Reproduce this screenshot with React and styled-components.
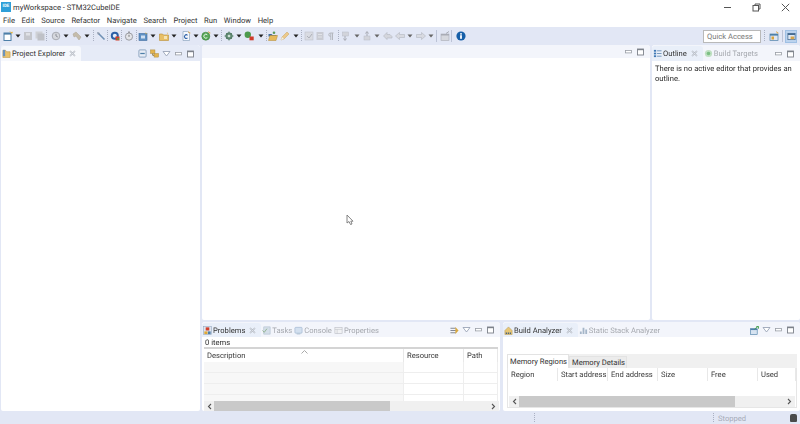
import React from 'react';
import styled, { createGlobalStyle } from 'styled-components';

const GlobalStyle = createGlobalStyle`
    html, body {
        margin: 0;
        padding: 0;
        background: #e2e7f5;
        overflow: hidden;
    }
    body {
        font-family: Roboto, 'Liberation Sans', sans-serif;
        font-size: 7.6px;
        color: #2c2c2c;
        text-rendering: geometricPrecision;
    }
`;

const Frame = styled.div`
    position: relative;
    width: 800px;
    height: 424px;
    display: flex;
    flex-direction: column;
    overflow: hidden;
    filter: blur(0.3px);
`;

const TitleBar = styled.div`
    height: 14px;
    background: #fff;
    display: flex;
    align-items: center;
    padding-left: 1px;
    font-size: 7.6px;
    color: #333;
`;

const AppBadge = styled.div`
    width: 10px;
    height: 10px;
    background: #2f9fd8;
    color: #fff;
    font-size: 4.5px;
    font-weight: 700;
    line-height: 10px;
    text-align: center;
    margin-right: 2px;
`;

const WindowButtons = styled.div`
    margin-left: auto;
    display: flex;
    width: 87px;
    height: 14px;
`;

const WindowButton = styled.div`
    width: 29px;
    display: flex;
    align-items: center;
    justify-content: center;
`;

const MenuBar = styled.div`
    height: 13px;
    background: #fff;
    display: flex;
    align-items: center;
    padding-left: 3px;
    gap: 6.7px;
    color: #333;
`;

const Toolbar = styled.div`
    height: 18px;
    background: #e2e7f5;
    display: flex;
    align-items: center;
    padding-left: 3px;
`;

const Tool = styled.div`
    flex: none;
    width: ${(p) => p.$w}px;
    height: 12px;
    display: flex;
    align-items: center;
    & > * {
        flex: none;
    }
`;

const ToolSep = styled.div`
    flex: none;
    width: 1px;
    height: 12px;
    margin-left: ${(p) => p.$left ?? 4}px;
    background: ${(p) => (p.$solid ? '#bcc3d6' : 'repeating-linear-gradient(#aab0c2 0 1px, transparent 1px 2px)')};
`;

const QuickAccess = styled.div`
    margin-left: auto;
    width: 58px;
    height: 13px;
    box-sizing: border-box;
    background: #fff;
    border: 1px solid #b9b9b9;
    color: #777;
    line-height: 11px;
    padding-left: 3px;
`;

const PerspectiveBar = styled.div`
    flex: none;
    display: flex;
    align-items: center;
    width: 39px;
`;

const PerspectiveIcon = styled.div`
    margin-left: 4px;
    margin-right: 1px;
    display: flex;
`;

const ActivePerspective = styled.div`
    margin-left: 2px;
    width: 12px;
    height: 13px;
    background: #bcd3ee;
    border: 1px solid #9fc0e4;
    box-sizing: border-box;
    display: flex;
    align-items: center;
    justify-content: center;
`;

const Workbench = styled.div`
    flex: 1;
    min-height: 0;
    display: flex;
    gap: 2px;
    padding-left: 1px;
`;

const LeftColumn = styled.div`
    width: 199px;
    display: flex;
    margin-bottom: 1px;
`;

const RightColumn = styled.div`
    flex: 1;
    min-width: 0;
    display: flex;
    flex-direction: column;
    gap: 2px;
`;

const TopRow = styled.div`
    height: 275px;
    display: flex;
    gap: 2px;
`;

const BottomRow = styled.div`
    flex: 1;
    min-height: 0;
    display: flex;
    gap: 3px;
    margin-bottom: 1px;
`;

const Panel = styled.section`
    flex: ${(p) => (p.$width ? 'none' : 1)};
    width: ${(p) => (p.$width ? `${p.$width}px` : 'auto')};
    min-width: 0;
    display: flex;
    flex-direction: column;
    background: #fff;
    border-radius: 3px 3px 2px 2px;
    overflow: hidden;
`;

const PanelHeader = styled.div`
    flex: none;
    height: ${(p) => p.$height || 15}px;
    box-sizing: border-box;
    padding-top: 1px;
    display: flex;
    align-items: stretch;
    background: ${(p) => p.$bg || '#f3f5fb'};
    white-space: nowrap;
`;

const Tab = styled.div`
    display: flex;
    align-items: center;
    gap: 1px;
    padding: 0 ${(p) => (p.$active ? 5 : 0)}px 0 1px;
    background: ${(p) => (p.$active ? p.$activeBg || '#e9eff9' : 'transparent')};
    color: ${(p) => (p.$active ? '#333' : '#a5a8ae')};
    border-radius: 3px 3px 0 0;
    margin-right: ${(p) => (p.$active ? 0 : 1)}px;
`;

const CloseGlyph = styled.svg`
    margin-left: 3px;
`;

const ViewTools = styled.div`
    margin-left: auto;
    display: flex;
    align-items: center;
    gap: 3px;
    padding-right: 5px;
`;

const PanelBody = styled.div`
    flex: 1;
    min-height: 0;
    display: flex;
    flex-direction: column;
    padding: ${(p) => p.$padding || '0'};
    line-height: 10px;
`;

const ItemCount = styled.div`
    height: 10px;
    padding-left: 1px;
    line-height: 12px;
    border-bottom: 2px solid #d4d4d4;
    margin: 0 2px;
`;

const DataTable = styled.div`
    flex: 1;
    min-height: 0;
    position: relative;
    margin: ${(p) => p.$margin || '0 2px'};
    display: grid;
    grid-template-columns: ${(p) => p.$columns};
    grid-template-rows: 13px;
    grid-auto-rows: 11px;
    overflow: hidden;
`;

const HeadCell = styled.div`
    padding-left: 3px;
    line-height: 13px;
    border-right: 1px solid #e8e8e8;
    color: #3a3a3a;
    white-space: nowrap;
`;

const RowCell = styled.div`
    background: ${(p) => (p.$shade ? '#f7f7f7' : '#fff')};
    border-right: 1px solid #eee;
    border-bottom: 1px solid #eeeeee;
`;

const SortMark = styled.svg`
    position: absolute;
    left: 97px;
    top: 1px;
`;

const ScrollBar = styled.div`
    flex: none;
    height: ${(p) => p.$height || 10}px;
    margin: ${(p) => p.$margin || '0 1px 0 2px'};
    background: #f0f0f0;
    display: flex;
    align-items: center;
    justify-content: space-between;
    position: relative;
`;

const ScrollArrow = styled.svg`
    margin: 0 3px;
`;

const ScrollThumb = styled.div`
    position: absolute;
    top: 0;
    bottom: 0;
    left: ${(p) => p.$left}px;
    width: ${(p) => p.$width}px;
    background: #c9c9c9;
`;

const MemoryTabs = styled.div`
    margin: 17px 3px 0 4px;
    height: 14px;
    background: #f0f0f0;
    display: flex;
    align-items: flex-end;
    flex: none;
`;

const MemoryTab = styled.div`
    width: ${(p) => p.$width}px;
    height: ${(p) => (p.$active ? 14 : 12)}px;
    padding-left: 2px;
    line-height: ${(p) => (p.$active ? 13 : 11)}px;
    background: ${(p) => (p.$active ? '#fff' : '#ececec')};
    border: 1px solid #e3e3e3;
    border-bottom: 0;
    box-sizing: border-box;
    white-space: nowrap;
    color: #333;
`;

const MemoryBody = styled.div`
    flex: 1;
    min-height: 0;
    display: flex;
    flex-direction: column;
    margin: 0 3px 3px 4px;
    border: 1px solid #e6e6e6;
    border-top: 0;
`;

const StatusBar = styled.div`
    height: 12px;
    flex: none;
    background: #e2e7f5;
    display: flex;
    align-items: center;
    color: #a6abb8;
`;

const StatusSep = styled.div`
    width: 1px;
    height: 10px;
    margin-left: ${(p) => p.$left}px;
    margin-right: 4px;
    background: repeating-linear-gradient(#aab0c2 0 1px, transparent 1px 2px);
`;

const TrashMark = styled.div`
    margin-left: auto;
    margin-right: 3px;
    width: 7px;
    height: 8px;
    background: #4a4a4a;
    border-radius: 2px 2px 1px 1px;
`;

const Cursor = styled.svg`
    position: absolute;
    left: 346px;
    top: 214px;
`;

const Sv = ({ s = 9, children, ...rest }) => (
    <svg width={s} height={s} viewBox="0 0 10 10" {...rest}>
        {children}
    </svg>
);

const icons = {
    new: (
        <>
            <rect x="1" y="2" width="7" height="7.5" fill="#fff" stroke="#4d7fa8" />
            <rect x="1" y="2" width="7" height="1.6" fill="#4d7fa8" />
            <path d="M7 0.5l1 1.2 1.3-.6-.5 1.5" stroke="#e3b23c" fill="none" />
        </>
    ),
    save: (
        <>
            <rect x="1" y="1" width="8" height="8" fill="#c4c6cc" />
            <rect x="3" y="2" width="4" height="2.5" fill="#dfe1e6" />
        </>
    ),
    saveAll: (
        <>
            <rect x="0.5" y="0.5" width="7" height="7" fill="#cfd1d6" />
            <rect x="2.5" y="2.5" width="7" height="7" fill="#bfc1c7" />
        </>
    ),
    clock: (
        <>
            <circle cx="5" cy="5" r="3.8" fill="#d6d8de" stroke="#a8abb3" />
            <path d="M5 2.8V5l1.8 1" stroke="#8d9099" fill="none" />
        </>
    ),
    hammer: <path d="M1 3l3-2 5 5-2 3-3-4-2 1z" fill="#c4bcab" stroke="#aca391" strokeWidth=".5" />,
    pin: (
        <>
            <path d="M2 2l6.5 6.5" stroke="#6f90b4" strokeWidth="1.6" />
            <path d="M1 1l3 1-2 2z" fill="#8f9aab" />
        </>
    ),
    debugBug: (
        <>
            <circle cx="4.8" cy="4.8" r="4" fill="#2c5fa6" />
            <circle cx="4.8" cy="4.8" r="2" fill="#e7eefa" />
            <rect x="5.5" y="5.5" width="4" height="4" fill="#d1402c" />
            <circle cx="8" cy="8" r="1" fill="#54a33c" />
        </>
    ),
    timer: (
        <>
            <circle cx="5" cy="5.6" r="3.6" fill="#e3e4e8" stroke="#9a9ca2" />
            <rect x="4" y="0.5" width="2" height="1.5" fill="#9a9ca2" />
            <path d="M5 3.8v2" stroke="#777" />
        </>
    ),
    project: (
        <>
            <rect x="1" y="2.5" width="8" height="7" fill="#5f91c4" stroke="#3e6c9f" strokeWidth=".6" />
            <rect x="3" y="4.5" width="4" height="3" fill="#cfe0f2" />
            <path d="M7 0.5l.6 1.2 1.4.2-1 1 .2 1.3" fill="#e3b23c" />
        </>
    ),
    folderNew: (
        <>
            <path d="M.5 3h3l1 1h5v5.5h-9z" fill="#e8bf66" stroke="#b98f36" strokeWidth=".6" />
            <rect x="5" y="5" width="3" height="3" fill="#f5e3b4" />
            <path d="M7.5.5l.5 1.2 1.3.3-1 .8" fill="#e3a53c" />
        </>
    ),
    fileC: (
        <>
            <path d="M2 .5h4.5L8.5 2.5v7H2z" fill="#f4f7fb" stroke="#8ea6c0" strokeWidth=".7" />
            <path d="M6.5 4.3a1.8 1.8 0 1 0 0 2.6" stroke="#2c5fa6" fill="none" strokeWidth="1.1" />
            <path d="M7.5.5l.5 1.2 1.3.3" stroke="#e3a53c" fill="none" />
        </>
    ),
    greenC: (
        <>
            <circle cx="4.8" cy="5.2" r="4" fill="#58a858" stroke="#3b7f3b" strokeWidth=".6" />
            <path d="M6.3 3.8a2 2 0 1 0 0 2.8" stroke="#e9f5e9" fill="none" />
            <path d="M7.5.5l.5 1.2 1.3.3" stroke="#e3a53c" fill="none" />
        </>
    ),
    gear: (
        <>
            <circle cx="5" cy="5" r="3.2" fill="#6e9a80" stroke="#4e7460" />
            <path d="M5 0.5v9M.5 5h9M2 2l6 6M8 2l-6 6" stroke="#5f8770" />
            <circle cx="5" cy="5" r="1.3" fill="#cfe0d6" />
        </>
    ),
    run: (
        <>
            <circle cx="3.8" cy="3.8" r="3.2" fill="#4d9a4d" />
            <rect x="5.5" y="5.5" width="4.2" height="3.8" fill="#cf3a2a" />
        </>
    ),
    folderOpen: (
        <>
            <path d="M.5 3h3l1 1h4v1.5h-8z" fill="#3f6f9f" />
            <path d="M.5 9.5l1.5-5h7.5l-1.5 5z" fill="#e6ba5a" stroke="#b48a32" strokeWidth=".5" />
            <circle cx="6" cy="1.8" r="1.3" fill="#5a9a5a" />
        </>
    ),
    pen: (
        <>
            <path d="M1 9l1-3 5-5 2 2-5 5z" fill="#ecc98a" stroke="#c7a25e" strokeWidth=".5" />
            <path d="M1 9l1-3 2 2z" fill="#f0f0ea" />
        </>
    ),
    ghostA: (
        <>
            <rect x="1" y="1" width="8" height="8" fill="#d9dbe2" stroke="#bfc2cb" strokeWidth=".6" />
            <path d="M3 5l2 2 3-4" stroke="#aeb1ba" fill="none" />
        </>
    ),
    ghostB: (
        <>
            <rect x="1.5" y="1" width="7" height="8" fill="#c9cbd3" />
            <rect x="3" y="3" width="4" height="1" fill="#e1e3e8" />
            <rect x="3" y="5.5" width="4" height="1" fill="#e1e3e8" />
        </>
    ),
    pilcrow: <path d="M6.5 9V2M4.8 9V2M7.5 2H4.5a1.7 1.7 0 0 0 0 3.4h.4" stroke="#b4b7be" fill="none" />,
    nextAnn: (
        <>
            <rect x="1.5" y="1" width="6" height="4" fill="#d2d4db" stroke="#b9bcc5" strokeWidth=".5" />
            <path d="M4 5v4M2.5 7.5L4 9.5l1.5-2" stroke="#a8abb4" fill="none" />
        </>
    ),
    prevAnn: (
        <>
            <rect x="2" y="5" width="6" height="4" fill="#d2d4db" stroke="#b9bcc5" strokeWidth=".5" />
            <path d="M5 5V1M3.5 2.5L5 .5l1.5 2" stroke="#a8abb4" fill="none" />
        </>
    ),
    lastEdit: (
        <path d="M.5 5L4 1.5V3.5h3l2 2v1.5H4v1.5z" fill="#d4d6dd" stroke="#b4b7c0" strokeWidth=".6" />
    ),
    back: <path d="M.5 5L4.5 1.5v2H9.5v3H4.5v2z" fill="#d8dae1" stroke="#b4b7c0" strokeWidth=".6" />,
    forward: <path d="M9.5 5L5.5 1.5v2H.5v3h5v2z" fill="#d8dae1" stroke="#b4b7c0" strokeWidth=".6" />,
    pinEditor: (
        <>
            <rect x="1" y="3" width="8" height="6.5" fill="#d6d8de" stroke="#a9acb5" strokeWidth=".6" />
            <rect x="1" y="3" width="8" height="1.5" fill="#a9acb5" />
            <path d="M6 2.5L9 .5" stroke="#a9acb5" />
        </>
    ),
    info: (
        <>
            <circle cx="5" cy="5" r="4.6" fill="#165fa8" />
            <rect x="4.1" y="4.2" width="1.8" height="3.6" fill="#fff" />
            <rect x="4.1" y="2.2" width="1.8" height="1.4" fill="#fff" />
        </>
    ),
    perspective: (
        <>
            <rect x="1" y="3" width="8" height="6.5" fill="#dfe6f2" stroke="#4d7fa8" strokeWidth=".7" />
            <rect x="1" y="3" width="8" height="1.6" fill="#4d7fa8" />
            <rect x="2.5" y="5.5" width="2.5" height="3" fill="#d9a23c" />
            <path d="M7.5.5l.5 1.2 1.3.3" stroke="#e3a53c" fill="none" />
        </>
    ),
    cube: (
        <>
            <rect x="1" y="1.5" width="8" height="7" fill="#dfe8f4" stroke="#41688f" strokeWidth=".8" />
            <rect x="1" y="1.5" width="8" height="1.8" fill="#41688f" />
            <rect x="4" y="5" width="4" height="3" fill="#d5a44a" />
        </>
    ),
    explorer: (
        <>
            <path d="M1 1.5h3l1 1.5h4v6.5H1z" fill="#e8c16c" stroke="#b8923f" strokeWidth=".6" />
            <rect x="1" y="1" width="2.5" height="7" fill="#6b93bd" />
        </>
    ),
    collapse: (
        <>
            <rect x="1" y="1" width="8" height="8" rx="1" fill="#e8edf6" stroke="#6f8db0" strokeWidth=".8" />
            <rect x="2.5" y="4.3" width="5" height="1.4" fill="#4d7fa8" />
        </>
    ),
    link: (
        <>
            <rect x="0.5" y="1" width="5" height="4" fill="#e3b44e" stroke="#a98636" strokeWidth=".5" />
            <rect x="4.5" y="5" width="5" height="4" fill="#e3b44e" stroke="#a98636" strokeWidth=".5" />
            <path d="M3 5v2h1.5" stroke="#8c7130" fill="none" />
        </>
    ),
    outline: (
        <>
            <rect x="1" y="1" width="2.5" height="2" fill="#3f78b5" />
            <rect x="1" y="4" width="2.5" height="2" fill="#3f78b5" />
            <rect x="1" y="7" width="2.5" height="2" fill="#3f78b5" />
            <path d="M4.5 2h5M4.5 5h5M4.5 8h5" stroke="#6a8fb8" />
        </>
    ),
    buildTargets: (
        <>
            <circle cx="5" cy="5" r="4" fill="#bfe0c2" />
            <circle cx="5" cy="5" r="2" fill="#7cbf83" />
        </>
    ),
    problems: (
        <>
            <rect x="0.5" y="0.5" width="9" height="9" fill="#dfe5ef" stroke="#8ea2bb" strokeWidth=".6" />
            <rect x="3" y="1.5" width="4" height="3.5" fill="#d1402c" />
            <rect x="1.5" y="6" width="3.5" height="3" fill="#e0a832" />
            <rect x="5.5" y="6" width="3" height="3" fill="#4d7fa8" />
        </>
    ),
    tasks: (
        <>
            <rect x="2" y="1" width="7" height="8" fill="#d5dfe9" stroke="#a6b7c7" strokeWidth=".6" />
            <path d="M.5 5l2 2 3-4" stroke="#8db08d" fill="none" />
        </>
    ),
    console: (
        <>
            <rect x="1" y="1.5" width="8" height="6.5" rx="1" fill="#d3e0ef" stroke="#9db4cd" strokeWidth=".7" />
            <rect x="3" y="8" width="4" height="1.4" fill="#b5c5d6" />
        </>
    ),
    properties: (
        <>
            <rect x="1" y="1.5" width="8" height="7" fill="#f1f2f4" stroke="#bcbfc6" strokeWidth=".7" />
            <path d="M1 3.8h8M3.5 3.8v4.7" stroke="#bcbfc6" strokeWidth=".6" />
        </>
    ),
    showList: (
        <>
            <path d="M.5 2.5h6M.5 5h7M.5 7.5h6" stroke="#777c86" />
            <path d="M6 1l3.5 4L6 9z" fill="#d9a940" />
        </>
    ),
    analyzer: (
        <>
            <path d="M1 5L5 1l4 4v4.5H1z" fill="#e7c676" stroke="#ab8a3e" strokeWidth=".5" />
            <path d="M2 8h1.2M4.2 8h1.2M6.4 8h1.2" stroke="#34567c" strokeWidth="1.5" />
        </>
    ),
    stack: <path d="M1 9V6h2v3zM4 9V2h2v7zM7 9V4h2v5z" fill="#a4b5c8" />,
    exportTable: (
        <>
            <rect x="0.5" y="3" width="7.5" height="6.5" fill="#d6e3f1" stroke="#4d7fa8" strokeWidth=".7" />
            <rect x="0.5" y="3" width="7.5" height="1.5" fill="#4d7fa8" />
            <path d="M5 3.5L9 .5M7 .5h2.5V3" stroke="#3f9c48" fill="none" />
        </>
    ),
};

const TOOLS = [
    ['new', 10], ['dd', 10], ['save', 12], ['saveAll', 7], ['sep', 9], ['clock', 10], ['dd', 11], ['hammer', 10], ['dd', 7],
    ['sep', 7], ['pin', 7], ['sep', 7], ['debugBug', 7], ['sep', 7], ['timer', 8], ['sep', 6], ['project', 10], ['dd', 11],
    ['folderNew', 10], ['dd', 12], ['fileC', 10], ['dd', 10], ['greenC', 10], ['dd', 6], ['sep', 7], ['gear', 10], ['dd', 10],
    ['run', 12], ['dd', 6], ['sep', 6], ['folderOpen', 12], ['pen', 11], ['dd', 6], ['sep', 7], ['ghostA', 11], ['ghostB', 11],
    ['pilcrow', 8], ['sep', 7], ['nextAnn', 11], ['ddGrey', 10], ['prevAnn', 10], ['ddGrey', 11], ['lastEdit', 12], ['back', 10],
    ['ddGrey', 11], ['forward', 10], ['ddGrey', 6], ['solid', 8], ['pinEditor', 7], ['solid', 9], ['info', 10],
];

const Dropdown = ({ color }) => (
    <Sv s={10}>
        <path d="M2.5 3.5h5L5 6.5z" fill={color} />
    </Sv>
);

const ToolItem = ({ name, w }) => {
    let content;
    if (name === 'sep') content = <ToolSep />;
    else if (name === 'solid') content = <ToolSep $solid />;
    else if (name === 'dd') content = <Dropdown color="#222" />;
    else if (name === 'ddGrey') content = <Dropdown color="#666" />;
    else content = <Sv s={10}>{icons[name]}</Sv>;
    return <Tool $w={w}>{content}</Tool>;
};

const Close = () => (
    <CloseGlyph width="7" height="7" viewBox="0 0 7 7">
        <path d="M1 1l5 5M6 1L1 6" stroke="#a8aeb8" strokeWidth="1.4" fill="none" />
        <path d="M1 1l5 5M6 1L1 6" stroke="#f4f6fb" strokeWidth=".5" fill="none" />
    </CloseGlyph>
);

const ViewMenu = () => (
    <svg width="9" height="8" viewBox="0 0 9 8">
        <path d="M1 1.5h7L4.5 6z" fill="#fff" stroke="#8f9aae" strokeWidth=".8" />
    </svg>
);

const Minimize = () => (
    <svg width="9" height="8" viewBox="0 0 9 8">
        <rect x="1.5" y="2.5" width="6" height="2.4" fill="#fff" stroke="#999ea6" strokeWidth=".8" />
    </svg>
);

const Maximize = () => (
    <svg width="9" height="8" viewBox="0 0 9 8">
        <rect x="1.5" y="1" width="6" height="6" fill="#fff" stroke="#7d828a" strokeWidth=".9" />
        <rect x="1.5" y="1" width="6" height="1.2" fill="#7d828a" />
    </svg>
);

const ArrowLeft = () => (
    <ScrollArrow width="5" height="7" viewBox="0 0 5 7">
        <path d="M4 1L1.5 3.5 4 6" stroke="#555" strokeWidth="1.1" fill="none" />
    </ScrollArrow>
);

const ArrowRight = () => (
    <ScrollArrow width="5" height="7" viewBox="0 0 5 7">
        <path d="M1 1l2.5 2.5L1 6" stroke="#555" strokeWidth="1.1" fill="none" />
    </ScrollArrow>
);

const ViewTab = ({ icon, label, active, bg }) => (
    <Tab $active={active} $activeBg={bg}>
        <Sv>{icons[icon]}</Sv>
        {label}
        {active && <Close />}
    </Tab>
);

const MENU = ['File', 'Edit', 'Source', 'Refactor', 'Navigate', 'Search', 'Project', 'Run', 'Window', 'Help'];
const REGION_HEADS = ['Region', 'Start address', 'End address', 'Size', 'Free', 'Used'];

const App = () => {
    return (
        <Frame>
            <GlobalStyle />
            <TitleBar>
                <AppBadge>IDE</AppBadge>
                myWorkspace - STM32CubeIDE
                <WindowButtons>
                    <WindowButton>
                        <svg width="9" height="9" viewBox="0 0 9 9">
                            <path d="M1 4.5h7" stroke="#555" />
                        </svg>
                    </WindowButton>
                    <WindowButton>
                        <svg width="9" height="9" viewBox="0 0 9 9">
                            <rect x="1" y="2.5" width="5.5" height="5.5" fill="none" stroke="#555" />
                            <path d="M3 2.5V1h5v5H6.5" fill="none" stroke="#555" />
                        </svg>
                    </WindowButton>
                    <WindowButton>
                        <svg width="9" height="9" viewBox="0 0 9 9">
                            <path d="M.8.8l7.4 7.4M8.2.8L.8 8.2" stroke="#555" />
                        </svg>
                    </WindowButton>
                </WindowButtons>
            </TitleBar>
            <MenuBar>
                {MENU.map((m) => (
                    <span key={m}>{m}</span>
                ))}
            </MenuBar>
            <Toolbar>
                {TOOLS.map(([name, w], i) => (
                    <ToolItem key={i} name={name} w={w} />
                ))}
                <QuickAccess>Quick Access</QuickAccess>
                <PerspectiveBar>
                    <ToolSep $left={3} />
                    <PerspectiveIcon>
                        <Sv s={10}>{icons.perspective}</Sv>
                    </PerspectiveIcon>
                    <ToolSep $solid $left={2} />
                    <ActivePerspective>
                        <Sv>{icons.cube}</Sv>
                    </ActivePerspective>
                </PerspectiveBar>
            </Toolbar>
            <Workbench>
                <LeftColumn>
                    <Panel>
                        <PanelHeader $height={16} $bg="#e6ebf7">
                            <ViewTab icon="explorer" label="Project Explorer" active bg="#f6f8fc" />
                            <ViewTools>
                                <Sv>{icons.collapse}</Sv>
                                <Sv>{icons.link}</Sv>
                                <ViewMenu />
                                <Minimize />
                                <Maximize />
                            </ViewTools>
                        </PanelHeader>
                        <PanelBody />
                    </Panel>
                </LeftColumn>
                <RightColumn>
                    <TopRow>
                        <Panel>
                            <PanelHeader $height={13}>
                                <ViewTools>
                                    <Minimize />
                                    <Maximize />
                                </ViewTools>
                            </PanelHeader>
                            <PanelBody />
                        </Panel>
                        <Panel $width={148}>
                            <PanelHeader $height={16}>
                                <ViewTab icon="outline" label="Outline" active />
                                <ViewTab icon="buildTargets" label="Build Targets" />
                                <ViewTools>
                                    <Minimize />
                                    <Maximize />
                                </ViewTools>
                            </PanelHeader>
                            <PanelBody $padding="3px 3px">There is no active editor that provides an outline.</PanelBody>
                        </Panel>
                    </TopRow>
                    <BottomRow>
                        <Panel $width={298}>
                            <PanelHeader>
                                <ViewTab icon="problems" label="Problems" active />
                                <ViewTab icon="tasks" label="Tasks" />
                                <ViewTab icon="console" label="Console" />
                                <ViewTab icon="properties" label="Properties" />
                                <ViewTools>
                                    <Sv>{icons.showList}</Sv>
                                    <ViewMenu />
                                    <Minimize />
                                    <Maximize />
                                </ViewTools>
                            </PanelHeader>
                            <PanelBody>
                                <ItemCount>0 items</ItemCount>
                                <DataTable $columns="200px 60px 1fr">
                                    <SortMark width="7" height="4" viewBox="0 0 7 4">
                                        <path d="M.5 3.5L3.5.5l3 3" stroke="#a9a9a9" fill="none" />
                                    </SortMark>
                                    <HeadCell>Description</HeadCell>
                                    <HeadCell>Resource</HeadCell>
                                    <HeadCell>Path</HeadCell>
                                    {[0, 1, 2, 3].flatMap((r) => [
                                        <RowCell key={`${r}a`} $shade />,
                                        <RowCell key={`${r}b`} />,
                                        <RowCell key={`${r}c`} />,
                                    ])}
                                </DataTable>
                                <ScrollBar>
                                    <ArrowLeft />
                                    <ScrollThumb $left={10} $width={176} />
                                    <ArrowRight />
                                </ScrollBar>
                            </PanelBody>
                        </Panel>
                        <Panel>
                            <PanelHeader>
                                <ViewTab icon="analyzer" label="Build Analyzer" active />
                                <ViewTab icon="stack" label="Static Stack Analyzer" />
                                <ViewTools>
                                    <Sv>{icons.exportTable}</Sv>
                                    <ViewMenu />
                                    <Minimize />
                                    <Maximize />
                                </ViewTools>
                            </PanelHeader>
                            <PanelBody>
                                <MemoryTabs>
                                    <MemoryTab $active $width={62}>Memory Regions</MemoryTab>
                                    <MemoryTab $width={58}>Memory Details</MemoryTab>
                                </MemoryTabs>
                                <MemoryBody>
                                    <DataTable $margin="0" $columns="50px 50px 50px 50px 50px 1fr">
                                        {REGION_HEADS.map((h) => (
                                            <HeadCell key={h}>{h}</HeadCell>
                                        ))}
                                    </DataTable>
                                    <ScrollBar $margin="0 1px" $height={11}>
                                        <ArrowLeft />
                                        <ScrollThumb $left={10} $width={216} />
                                        <ArrowRight />
                                    </ScrollBar>
                                </MemoryBody>
                            </PanelBody>
                        </Panel>
                    </BottomRow>
                </RightColumn>
            </Workbench>
            <StatusBar>
                <StatusSep $left={534} />
                <StatusSep $left={174} />
                Stopped
                <TrashMark />
            </StatusBar>
            <Cursor width="9" height="12" viewBox="0 0 9 12">
                <path d="M1 1v8l2-1.5L4.5 10.5 6 10 4.8 7.2H7z" fill="#fff" stroke="#777" strokeWidth=".9" />
            </Cursor>
        </Frame>
    );
};

export default App;
